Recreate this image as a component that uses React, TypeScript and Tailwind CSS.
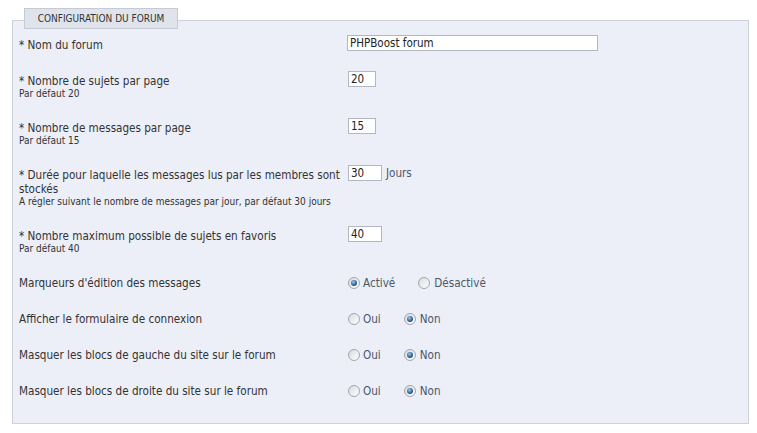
import React from "react";

const font = { fontFamily: '"DejaVu Sans Condensed", "DejaVu Sans", sans-serif' };

function Radio({ checked }: { checked?: boolean }) {
  return (
    <span className="relative flex h-[12px] w-[12px] shrink-0 items-center justify-center rounded-full border border-[#a3a6ad] bg-[linear-gradient(135deg,#d8dadf,#ffffff)]">
      {checked && (
        <span className="block h-[6px] w-[6px] rounded-full bg-[radial-gradient(circle_at_40%_35%,#9cc8ee,#1f5688_65%)]" />
      )}
    </span>
  );
}

function RadioPair({ a, b, first }: { a: string; b: string; first: boolean }) {
  return (
    <div className="flex h-[17px] items-center pt-[3px] text-[11.6px] leading-[14px] text-[#4d5868]">
      <Radio checked={first} />
      <span className="ml-[3px] block">{a}</span>
      <span className="ml-[23px] flex">
        <Radio checked={!first} />
      </span>
      <span className="ml-[4px] block">{b}</span>
    </div>
  );
}

function Input({ value, w }: { value: string; w: string }) {
  return (
    <div className={`h-[16px] ${w} border border-[#b3b7c2] bg-white pl-[2px] text-[11.5px] leading-[14px] text-[#222]`}>
      {value}
    </div>
  );
}

function Row({
  label,
  help,
  children,
  required,
}: {
  label: React.ReactNode;
  help?: string;
  children: React.ReactNode;
  required?: boolean;
}) {
  return (
    <div className="flex items-start">
      <div className="w-[329px] shrink-0 pt-[3px]">
        <div className="text-[11.6px] leading-[14px] text-[#333]">
          {required && "* "}
          {label}
        </div>
        {help && <div className="text-[10px] leading-[11px] text-[#333]">{help}</div>}
      </div>
      <div>{children}</div>
    </div>
  );
}

export default function App() {
  return (
    <div className="min-h-[433px] w-[757px] bg-white px-[12px] pt-[8px]" style={font}>
      <div className="relative z-10 ml-[12px] -mb-[9px] flex h-[21px] w-[154px] items-center justify-center border border-[#c5cad4] bg-[#dfe3ec] text-[10px] text-[#333]">
        CONFIGURATION DU FORUM
      </div>
      <div className="w-[737px] border border-[#cdd1da] bg-[#eceef8] pb-[25px] pl-[6px] pt-[14px]">
        <div className="flex flex-col gap-[19px]">
          <Row label="Nom du forum" required>
            <div className="-ml-[1px]">
              <Input value="PHPBoost forum" w="w-[251px]" />
            </div>
          </Row>
          <Row label="Nombre de sujets par page" help="Par défaut 20" required>
            <Input value="20" w="w-[28px]" />
          </Row>
          <Row label="Nombre de messages par page" help="Par défaut 15" required>
            <Input value="15" w="w-[28px]" />
          </Row>
          <Row
            label="Durée pour laquelle les messages lus par les membres sont stockés"
            help="A régler suivant le nombre de messages par jour, par défaut 30 jours"
            required
          >
            <div className="flex items-start">
              <Input value="30" w="w-[34px]" />
              <span className="ml-[4px] pt-[1px] text-[11.6px] leading-[14px] text-[#4d5868]">Jours</span>
            </div>
          </Row>
          <Row label="Nombre maximum possible de sujets en favoris" help="Par défaut 40" required>
            <Input value="40" w="w-[34px]" />
          </Row>
          <Row label="Marqueurs d'édition des messages">
            <RadioPair a="Activé" b="Désactivé" first={true} />
          </Row>
          <Row label="Afficher le formulaire de connexion">
            <RadioPair a="Oui" b="Non" first={false} />
          </Row>
          <Row label="Masquer les blocs de gauche du site sur le forum">
            <RadioPair a="Oui" b="Non" first={false} />
          </Row>
          <Row label="Masquer les blocs de droite du site sur le forum">
            <RadioPair a="Oui" b="Non" first={false} />
          </Row>
        </div>
      </div>
    </div>
  );
}
